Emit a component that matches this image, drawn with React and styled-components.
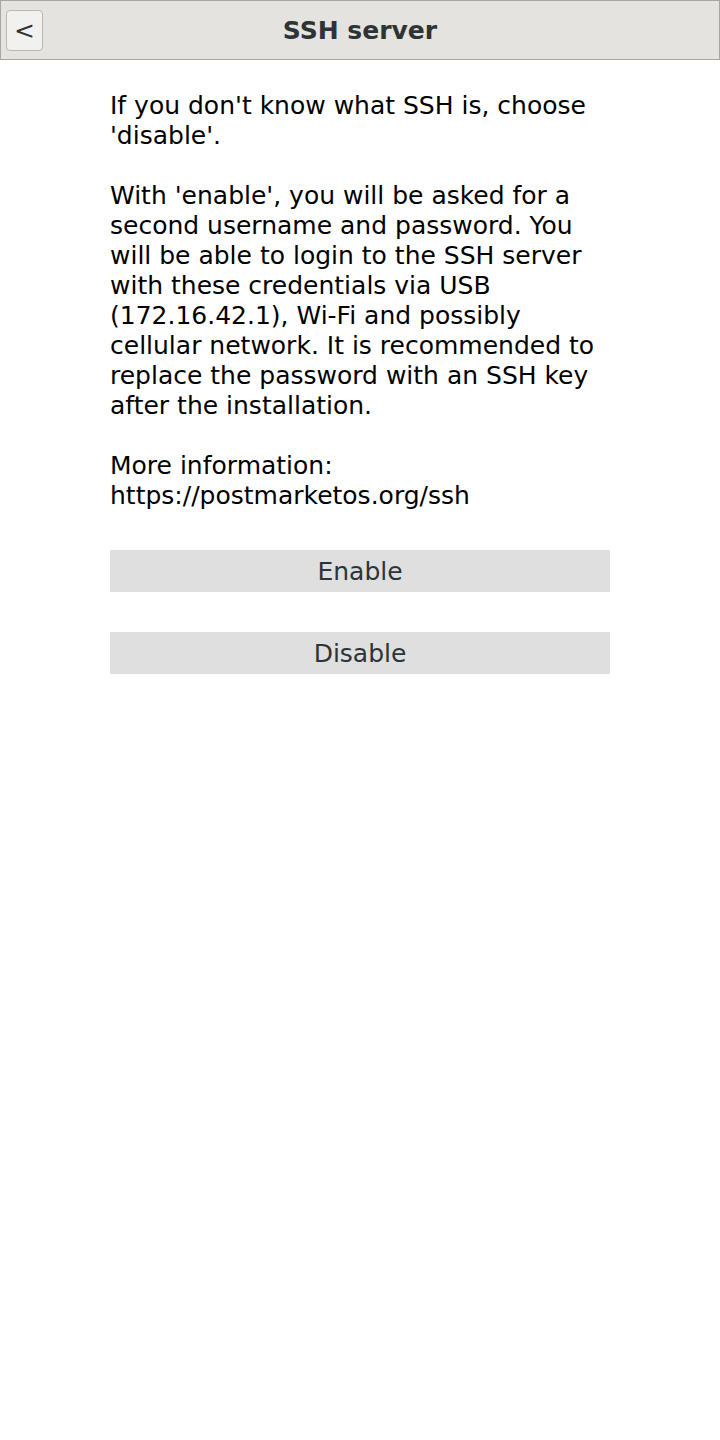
import React from "react";
import styled, { createGlobalStyle } from "styled-components";

const GlobalStyle = createGlobalStyle`
  body {
    margin: 0;
    background: #ffffff;
    font-family: "DejaVu Sans", sans-serif;
  }
`;

const Page = styled.div`
  width: 720px;
  min-height: 1440px;
  background: #ffffff;
`;

const HeaderBar = styled.div`
  height: 60px;
  box-sizing: border-box;
  border: 1px solid #a6a6a3;
  background: #e4e3df;
  display: grid;
  grid-template-columns: 60px 1fr 60px;
  align-items: center;
`;

const BackButton = styled.button`
  margin-left: 5px;
  width: 37px;
  height: 41px;
  box-sizing: border-box;
  border: 1px solid #b9b8b3;
  border-radius: 4px;
  background: #f1f1f0;
  color: #2e3436;
  font-family: "DejaVu Sans", sans-serif;
  font-size: 25px;
  padding: 0;
  display: flex;
  align-items: center;
  justify-content: center;
`;

const Title = styled.div`
  text-align: center;
  font-weight: bold;
  font-size: 25px;
  color: #2e3436;
`;

const Content = styled.div`
  width: 500px;
  margin: 0 auto;
  padding-top: 31px;
  display: flex;
  flex-direction: column;
`;

const Paragraph = styled.p`
  margin: 0 0 30px 0;
  font-size: 25px;
  line-height: 30px;
  color: #000000;
  &:last-of-type {
    margin-bottom: 39px;
  }
`;

const ChoiceButton = styled.button`
  height: 42px;
  border: none;
  background: #dfdfdf;
  color: #2e3436;
  font-family: "DejaVu Sans", sans-serif;
  font-size: 25px;
  margin-bottom: 40px;
  padding: 0;
`;

export default function App() {
  return (
    <Page>
      <GlobalStyle />
      <HeaderBar>
        <BackButton>&lt;</BackButton>
        <Title>SSH server</Title>
        <div />
      </HeaderBar>
      <Content>
        <Paragraph>If you don't know what SSH is, choose 'disable'.</Paragraph>
        <Paragraph>
          With 'enable', you will be asked for a second username and password.
          You will be able to login to the SSH server with these credentials via
          USB (172.16.42.1), Wi-Fi and possibly cellular network. It is
          recommended to replace the password with an SSH key after the
          installation.
        </Paragraph>
        <Paragraph>
          More information:
          <br />
          https://postmarketos.org/ssh
        </Paragraph>
        <ChoiceButton>Enable</ChoiceButton>
        <ChoiceButton>Disable</ChoiceButton>
      </Content>
    </Page>
  );
}
